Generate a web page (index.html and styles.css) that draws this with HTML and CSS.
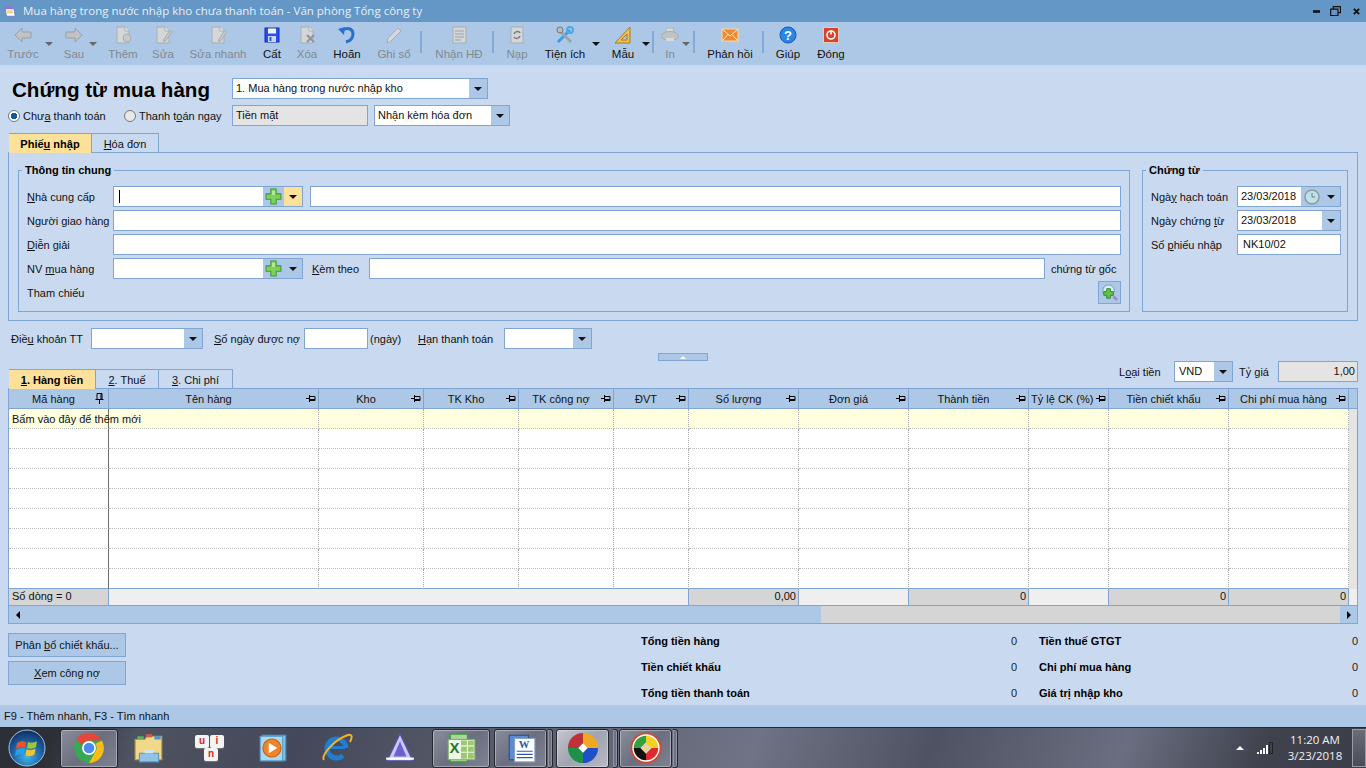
FILE: index.html
```html
<!DOCTYPE html>
<html lang="vi">
<head>
<meta charset="utf-8">
<title>Chứng từ mua hàng</title>
<link rel="stylesheet" href="styles.css">
</head>
<body>
<svg class="sprite" aria-hidden="true">
  <symbol id="pinh" viewBox="0 0 10 9"><path d="M0 4.500h3M3.500 1v7M3.500 2.500h5.500v4h-5.500" stroke="#000" fill="none"/><path d="M4 5.500h5" stroke="#000"/></symbol>
  <symbol id="pinv" viewBox="0 0 9 11"><path d="M2 .5h5v6H2zM.5 6.500h8M4.500 7v4M6 1v5" stroke="#000" fill="none"/></symbol>
  <symbol id="plus" viewBox="0 0 16 16"><path d="M5.500 1h5v4.500H15v5h-4.500V15h-5v-4.500H1v-5h4.500z" fill="#7fd05a" stroke="#3f9a35"/><path d="M6.500 2.500h3v4h-3z" fill="#b4ea90"/></symbol>
  <symbol id="page" viewBox="0 0 20 20"><path d="M4 2h8l4 4v12H4z" fill="#d4d7da" stroke="#a9adb1"/><path d="M12 2v4h4" fill="#eceef0" stroke="#a9adb1"/></symbol>
</svg>

<header class="titlebar">
  <svg class="app-icon" viewBox="0 0 16 16"><path d="M2 3h10l2 11H4z" fill="#fff" stroke="#6a7fc0"/><path d="M2 3h10v3H2z" fill="#8f76d0"/><path d="M4 8h7M4.500 10h7" stroke="#e0b030"/></svg>
  <span class="title-text">Mua hàng trong nước nhập kho chưa thanh toán - Văn phòng Tổng công ty</span>
  <div class="win-controls">
    <svg class="wc-min" viewBox="0 0 8 3"><rect width="8" height="3" fill="#111"/></svg>
    <svg class="wc-max" viewBox="0 0 12 11"><path d="M3.500 3V.7h8v6.600H9M.7 3.500h8v7h-8z" fill="none" stroke="#111" stroke-width="1.300"/></svg>
    <svg class="wc-close" viewBox="0 0 8 8"><path d="M1 1l6 6M7 1L1 7" stroke="#111" stroke-width="2.200"/></svg>
  </div>
</header>

<nav class="toolbar">
  <div class="tool w30 off"><svg viewBox="0 0 20 20"><path d="M2 10l7-7v4h9v6H9v4z" fill="#bfc3c7" stroke="#9b9fa3"/></svg><span>Trước</span></div>
  <div class="slot w22"><i class="caret dim"></i></div>
  <div class="tool w28 off"><svg viewBox="0 0 20 20"><path d="M18 10l-7-7v4H2v6h9v4z" fill="#bfc3c7" stroke="#9b9fa3"/></svg><span>Sau</span></div>
  <div class="slot w10"><i class="caret dim"></i></div>
  <div class="tool w50 off"><svg viewBox="0 0 20 20"><use href="#page"/><circle cx="14" cy="13" r="4" fill="#c6c9cc" stroke="#a9adb1"/></svg><span>Thêm</span></div>
  <div class="tool w30 off"><svg viewBox="0 0 20 20"><use href="#page"/><path d="M11 14l6-9 2 1.500-6 9-2.500 1z" fill="#c6c9cc" stroke="#a9adb1"/></svg><span>Sửa</span></div>
  <div class="tool w80 off"><svg viewBox="0 0 20 20"><use href="#page"/><path d="M11 14l6-9 2 1.500-6 9-2.500 1z" fill="#c6c9cc" stroke="#a9adb1"/></svg><span>Sửa nhanh</span></div>
  <div class="tool w28"><svg viewBox="0 0 20 20"><rect x="3" y="3" width="14" height="14" fill="#2b50e8" stroke="#1128c0"/><rect x="6" y="3.500" width="8" height="5" fill="#f2f6ff"/><rect x="6" y="11" width="8" height="6" fill="#c9d8f8"/><rect x="7.500" y="12" width="2" height="4" fill="#2b50e8"/></svg><span>Cất</span></div>
  <div class="tool w42 off"><svg viewBox="0 0 20 20"><use href="#page"/><path d="M10 10l7 7M17 10l-7 7" stroke="#93979b" stroke-width="2.200"/></svg><span>Xóa</span></div>
  <div class="tool w38"><svg viewBox="0 0 20 20"><path d="M6 5c5-3 10-1 10 4 0 4-3 7-7 8" fill="none" stroke="#2a6fd0" stroke-width="3"/><path d="M1 4l7-2-1 8z" fill="#2a6fd0"/></svg><span>Hoãn</span></div>
  <div class="slot w6"></div>
  <div class="tool w44 off"><svg viewBox="0 0 20 20"><path d="M3 18l1-5L14 3l3 3L7 16z" fill="#d5d7da" stroke="#a9adb1"/></svg><span>Ghi sổ</span></div>
  <div class="slot w10"><i class="sep"></i></div>
  <div class="tool w66 off"><svg viewBox="0 0 20 20"><rect x="4" y="2" width="13" height="16" fill="#d4d7da" stroke="#a9adb1"/><path d="M6 6h9M6 9h9M6 12h9M6 15h6" stroke="#9a9ea2"/></svg><span>Nhận HĐ</span></div>
  <div class="slot w2"><i class="sep"></i></div>
  <div class="tool w46 off"><svg viewBox="0 0 20 20"><rect x="4" y="2" width="12" height="16" fill="#d4d7da" stroke="#a9adb1"/><path d="M7 9c1-3 5-3 6-1M13 11c-1 3-5 3-6 1" fill="none" stroke="#777" stroke-width="1.500"/></svg><span>Nạp</span></div>
  <div class="tool w50"><svg viewBox="0 0 20 20"><path d="M3 17L15 5" stroke="#3d9ee6" stroke-width="3"/><path d="M3 4l13 13" stroke="#9aa4ac" stroke-width="3"/><circle cx="15" cy="5" r="3" fill="none" stroke="#4aa8ec" stroke-width="2"/><circle cx="5" cy="5" r="3" fill="#b8bec4" stroke="#6d7680"/></svg><span>Tiện ích</span></div>
  <div class="slot w12"><i class="caret"></i></div>
  <div class="tool w42"><svg viewBox="0 0 20 20"><path d="M17 2v16H2z" fill="#f0be55" stroke="#a87d22"/><path d="M14 9v6H8z" fill="#adc8e6" stroke="#a87d22"/></svg><span>Mẫu</span></div>
  <div class="slot w4"><i class="caret"></i></div>
  <div class="slot w10"><i class="sep"></i></div>
  <div class="tool w24 off"><svg viewBox="0 0 20 20"><path d="M6 3h7l1 5H6z" fill="#d8dadc" stroke="#b0b3b6"/><ellipse cx="10" cy="11" rx="8.500" ry="4.500" fill="#c0c3c6" stroke="#aaadb0"/><rect x="6" y="13" width="8" height="3" fill="#d8dadc"/></svg><span>In</span></div>
  <div class="slot w8"><i class="caret dim"></i></div>
  <div class="slot w8"><i class="sep"></i></div>
  <div class="tool w64"><svg viewBox="0 0 20 20" class="wide"><rect x="2" y="4" width="16" height="12" fill="#f08a2c" stroke="#fbd7a8"/><path d="M2.500 4.500L10 11l7.500-6.500M2.500 15.500L8 9.500M17.500 15.500L12 9.500" fill="none" stroke="#fff1dd"/></svg><span>Phản hồi</span></div>
  <div class="slot w2"><i class="sep"></i></div>
  <div class="tool w48"><svg viewBox="0 0 20 20"><circle cx="10" cy="10" r="8" fill="#2a86e8" stroke="#1558b0"/><text x="10" y="14.500" class="help-q">?</text></svg><span>Giúp</span></div>
  <div class="tool w38"><svg viewBox="0 0 20 20"><rect x="2.500" y="2.500" width="15" height="15" fill="#d8432a" stroke="#f4c8b8"/><circle cx="10" cy="10" r="4" fill="none" stroke="#fff" stroke-width="1.600"/><path d="M10 5.500v4" stroke="#fff" stroke-width="1.600"/></svg><span>Đóng</span></div>
</nav>

<main class="content">
  <div class="head">
    <h1 class="doc-title">Chứng từ mua hàng</h1>
    <div class="field w256"><span class="val">1. Mua hàng trong nước nhập kho</span><b class="drop"><i class="caret"></i></b></div>
  </div>
  <div class="payrow">
    <div class="radios">
      <label class="radio r1"><i class="dot on"></i><span>Chư<u>a</u> thanh toán</span></label>
      <label class="radio"><i class="dot"></i><span>Thanh t<u>o</u>án ngay</span></label>
    </div>
    <div class="field w136 ro"><span class="val">Tiền mặt</span></div>
    <div class="field w136 ml6"><span class="val">Nhận kèm hóa đơn</span><b class="drop"><i class="caret"></i></b></div>
  </div>

  <div class="tabs top-tabs">
    <div class="tab active w82"><span>Phiế<u>u</u> nhập</span></div>
    <div class="tab w67"><span><u>H</u>óa đơn</span></div>
  </div>
  <section class="panel">
    <div class="group g-main">
      <div class="legend">Thông tin chung</div>
      <div class="frow">
        <span class="lbl"><u>N</u>hà cung cấp</span>
        <div class="field w190"><i class="cursor"></i><span class="val"></span><b class="btn-plus"><svg viewBox="0 0 16 16"><use href="#plus"/></svg></b><b class="drop hot"><i class="caret"></i></b></div>
        <div class="field grow ml7"></div>
      </div>
      <div class="frow"><span class="lbl">N<u>g</u>ười giao hàng</span><div class="field grow"></div></div>
      <div class="frow"><span class="lbl"><u>D</u>iễn giải</span><div class="field grow"></div></div>
      <div class="frow">
        <span class="lbl">NV <u>m</u>ua hàng</span>
        <div class="field w190"><span class="val"></span><b class="btn-plus"><svg viewBox="0 0 16 16"><use href="#plus"/></svg></b><b class="drop"><i class="caret"></i></b></div>
        <span class="lbl-k"><u>K</u>èm theo</span>
        <div class="field grow"></div>
        <span class="lbl-g">chứng từ gốc</span>
      </div>
      <div class="frow last">
        <span class="lbl">Tham chiếu</span>
        <div class="ref-btn"><svg viewBox="0 0 20 20"><circle cx="9" cy="8" r="6" fill="#d8eef4" stroke="#6f9aa8"/><path d="M14 14l4 4" stroke="#9a8cd8" stroke-width="3"/><path d="M7 6h4v3h3v4h-3v3H7v-3H4V9h3z" fill="#62c04a" stroke="#2f8a2f"/></svg></div>
      </div>
    </div>
    <div class="group g-doc">
      <div class="legend">Chứng từ</div>
      <div class="frow"><span class="lbl">Ngà<u>y</u> hạch toán</span><div class="field grow"><span class="val">23/03/2018</span><b class="btn-clock"><svg viewBox="0 0 16 16"><circle cx="8" cy="8" r="7" fill="#bfe0e6" stroke="#8d9aa0" stroke-width="1.500"/><path d="M8 4v4h3" fill="none" stroke="#6a8088"/></svg></b><b class="drop"><i class="caret"></i></b></div></div>
      <div class="frow"><span class="lbl">Ngày chứng <u>t</u>ừ</span><div class="field grow"><span class="val">23/03/2018</span><b class="drop"><i class="caret"></i></b></div></div>
      <div class="frow"><span class="lbl">Số <u>p</u>hiếu nhập</span><div class="field grow"><span class="val nk">NK10/02</span></div></div>
    </div>
  </section>

  <div class="terms">
    <span class="t-l1">Điề<u>u</u> khoản TT</span>
    <div class="field w112"><span class="val"></span><b class="drop"><i class="caret"></i></b></div>
    <span class="t-l2"><u>S</u>ố ngày được nợ</span>
    <div class="field w64"></div>
    <span class="t-l3">(ngày)</span>
    <span class="t-l4"><u>H</u>ạn thanh toán</span>
    <div class="field w88"><span class="val"></span><b class="drop"><i class="caret"></i></b></div>
  </div>
  <div class="handle"><i class="caret up"></i></div>

  <div class="tabrow">
    <div class="tabs">
      <div class="tab active w87"><span><u>1</u>. Hàng tiền</span></div>
      <div class="tab w63"><span><u>2</u>. Thuế</span></div>
      <div class="tab w74"><span><u>3</u>. Chi phí</span></div>
    </div>
    <div class="currency">
      <span class="c-l1">L<u>o</u>ại tiền</span>
      <div class="field w59"><span class="val">VND</span><b class="drop"><i class="caret"></i></b></div>
      <span class="c-l2">Tỷ <u>g</u>iá</span>
      <div class="field w80 ro"><span class="val num">1,00</span></div>
    </div>
  </div>

  <section class="grid">
    <div class="g-row g-head">
      <div class="hc">Mã hàng<svg class="pin-v"><use href="#pinv"/></svg></div>
      <div class="hc">Tên hàng<svg class="pin"><use href="#pinh"/></svg></div>
      <div class="hc">Kho<svg class="pin"><use href="#pinh"/></svg></div>
      <div class="hc">TK Kho<svg class="pin"><use href="#pinh"/></svg></div>
      <div class="hc">TK công nợ<svg class="pin"><use href="#pinh"/></svg></div>
      <div class="hc">ĐVT<svg class="pin"><use href="#pinh"/></svg></div>
      <div class="hc">Số lượng<svg class="pin"><use href="#pinh"/></svg></div>
      <div class="hc">Đơn giá<svg class="pin"><use href="#pinh"/></svg></div>
      <div class="hc">Thành tiền<svg class="pin"><use href="#pinh"/></svg></div>
      <div class="hc hc-left">Tỷ lệ CK (%)<svg class="pin"><use href="#pinh"/></svg></div>
      <div class="hc">Tiền chiết khấu<svg class="pin"><use href="#pinh"/></svg></div>
      <div class="hc">Chi phí mua hàng<svg class="pin"><use href="#pinh"/></svg></div>
      <div class="hc end"></div>
    </div>
    <div class="g-row g-new">
      <div class="c first new-text">Bấm vào đây để thêm mới</div><div class="c"></div><div class="c"></div><div class="c"></div><div class="c"></div><div class="c"></div><div class="c"></div><div class="c"></div><div class="c"></div><div class="c"></div><div class="c"></div><div class="c"></div><div class="strip"></div>
    </div>
    <div class="g-row"><div class="c first"></div><div class="c"></div><div class="c"></div><div class="c"></div><div class="c"></div><div class="c"></div><div class="c"></div><div class="c"></div><div class="c"></div><div class="c"></div><div class="c"></div><div class="c"></div><div class="strip"></div></div>
    <div class="g-row"><div class="c first"></div><div class="c"></div><div class="c"></div><div class="c"></div><div class="c"></div><div class="c"></div><div class="c"></div><div class="c"></div><div class="c"></div><div class="c"></div><div class="c"></div><div class="c"></div><div class="strip"></div></div>
    <div class="g-row"><div class="c first"></div><div class="c"></div><div class="c"></div><div class="c"></div><div class="c"></div><div class="c"></div><div class="c"></div><div class="c"></div><div class="c"></div><div class="c"></div><div class="c"></div><div class="c"></div><div class="strip"></div></div>
    <div class="g-row"><div class="c first"></div><div class="c"></div><div class="c"></div><div class="c"></div><div class="c"></div><div class="c"></div><div class="c"></div><div class="c"></div><div class="c"></div><div class="c"></div><div class="c"></div><div class="c"></div><div class="strip"></div></div>
    <div class="g-row"><div class="c first"></div><div class="c"></div><div class="c"></div><div class="c"></div><div class="c"></div><div class="c"></div><div class="c"></div><div class="c"></div><div class="c"></div><div class="c"></div><div class="c"></div><div class="c"></div><div class="strip"></div></div>
    <div class="g-row"><div class="c first"></div><div class="c"></div><div class="c"></div><div class="c"></div><div class="c"></div><div class="c"></div><div class="c"></div><div class="c"></div><div class="c"></div><div class="c"></div><div class="c"></div><div class="c"></div><div class="strip"></div></div>
    <div class="g-row"><div class="c first"></div><div class="c"></div><div class="c"></div><div class="c"></div><div class="c"></div><div class="c"></div><div class="c"></div><div class="c"></div><div class="c"></div><div class="c"></div><div class="c"></div><div class="c"></div><div class="strip"></div></div>
    <div class="g-row g-last"><div class="c first"></div><div class="c"></div><div class="c"></div><div class="c"></div><div class="c"></div><div class="c"></div><div class="c"></div><div class="c"></div><div class="c"></div><div class="c"></div><div class="c"></div><div class="c"></div><div class="strip"></div></div>
    <div class="g-foot">
      <div class="fc gray left">Số dòng = 0</div>
      <div class="fc span5"></div>
      <div class="fc gray">0,00</div>
      <div class="fc"></div>
      <div class="fc gray">0</div>
      <div class="fc"></div>
      <div class="fc gray">0</div>
      <div class="fc gray">0</div>
      <div class="fc end"></div>
    </div>
    <div class="g-scroll">
      <div class="sb-btn"><i class="tri-l"></i></div>
      <div class="sb-thumb"></div>
      <div class="sb-track"></div>
      <div class="sb-btn"><i class="tri-r"></i></div>
    </div>
  </section>

  <div class="bottom">
    <div class="actions">
      <div class="action"><span>Phân <u>b</u>ổ chiết khấu...</span></div>
      <div class="action"><span><u>X</u>em công nợ</span></div>
    </div>
    <div class="totals">
      <b>Tổng tiền hàng</b><span>0</span><i></i><b>Tiền thuế GTGT</b><span>0</span>
      <b>Tiền chiết khấu</b><span>0</span><i></i><b>Chi phí mua hàng</b><span>0</span>
      <b>Tổng tiền thanh toán</b><span>0</span><i></i><b>Giá trị nhập kho</b><span>0</span>
    </div>
  </div>
</main>

<div class="status">F9 - Thêm nhanh, F3 - Tìm nhanh</div>

<footer class="taskbar">
  <div class="start"><svg viewBox="0 0 38 38"><defs><radialGradient id="orb" cx=".5" cy=".75" r=".75"><stop offset="0" stop-color="#3fb4e8"/><stop offset=".6" stop-color="#1d5a9c"/><stop offset="1" stop-color="#0f2f5c"/></radialGradient></defs><circle cx="19" cy="19" r="18" fill="url(#orb)" stroke="#9cc4e8"/><path d="M9 14c3-2 6-2 9-1l-1 6c-3-1-6-1-9 1z" fill="#e8552a"/><path d="M20 13c3 1 6 1 9-1l-1 6c-3 2-6 2-9 1z" fill="#9cc830"/><path d="M8 21c3-2 6-2 9-1l-1 6c-3-1-6-1-9 1z" fill="#2a9ee8"/><path d="M18.500 20.500c3 1 6 1 9-1l-1 6c-3 2-6 2-9 1z" fill="#f4c430"/></svg></div>
  <div class="tb framed w58"><svg viewBox="0 0 30 30"><circle cx="15" cy="15" r="14" fill="#3aa757"/><path d="M15 1a14 14 0 0 1 12.100 7H15a7 7 0 0 0-6.500 4.500L3 7A14 14 0 0 1 15 1z" fill="#e8453c"/><path d="M27.100 8A14 14 0 0 1 15 29l6-10.500A7 7 0 0 0 21 11z" fill="#f9bc15"/><circle cx="15" cy="15" r="6.500" fill="#fff"/><circle cx="15" cy="15" r="5" fill="#4a8af4"/></svg></div>
  <div class="tb w62"><svg viewBox="0 0 30 30"><path d="M2 7h9l2-3h14v22H2z" fill="#f2d98a" stroke="#b89a50"/><path d="M4 4h6v3H4z" fill="#5ab55a"/><path d="M12 2h6v3h-6z" fill="#d05a4a"/><path d="M20 4h6v3h-6z" fill="#4a90d8"/><path d="M6 20h18v8H6z" fill="#8fc4e8" stroke="#5a94c0"/><path d="M11 20h8v-3h-8z" fill="#cfe6f4"/></svg></div>
  <div class="tb w62"><div class="uni"><span class="key k1">u</span><span class="key k2">i</span><span class="key k3">n</span></div></div>
  <div class="tb w62"><svg viewBox="0 0 30 30"><rect x="5" y="3" width="22" height="24" fill="#7cc0e4" stroke="#4a8cb8"/><rect x="3" y="4" width="21" height="23" fill="#a8d8f0" stroke="#5a9cc8"/><circle cx="14" cy="15" r="8.500" fill="#f0842a" stroke="#c85f10"/><path d="M11 10l8 5-8 5z" fill="#fff"/></svg></div>
  <div class="tb w66"><svg viewBox="0 0 32 32"><path d="M25 16a9.500 9.500 0 1 0-3 7.500" fill="none" stroke="#1f7ed0" stroke-width="5"/><path d="M9 15.500h15" stroke="#1f7ed0" stroke-width="3"/><path d="M3 28C0 24 12 8 27 3c5-1 4 3 2 7" fill="none" stroke="#f0b428" stroke-width="2"/></svg></div>
  <div class="tb w60"><svg viewBox="0 0 30 30"><path d="M15 2L27 27H3z" fill="#c8c8f0" stroke="#5a50c0"/><path d="M15 9l6 14H9z" fill="#6a60d0"/><path d="M2 25h26" stroke="#fff" stroke-width="2"/></svg></div>
  <div class="tb framed w58 ml2"><svg viewBox="0 0 30 30"><path d="M5 2h16v26H5z" fill="#a8d898" stroke="#3a9a3a"/><rect x="3" y="7" width="25" height="19" fill="#f0f6e8" stroke="#7ab06a"/><path d="M15 8h12v17H15z" fill="#9cc870"/><path d="M15 13h12M15 19h12M21 8v17" stroke="#f0f6e8"/><text x="9" y="20" class="xl">X</text></svg></div>
  <div class="tb framed w53 ml4"><svg viewBox="0 0 30 30"><path d="M4 3h18v23H4z" fill="#5a8ad8" stroke="#1f4ea0"/><rect x="9" y="6" width="19" height="22" fill="#fff" stroke="#8aa0c0"/><text x="13" y="15" class="wd">W</text><path d="M11 18h15M11 21h15M11 24h15" stroke="#2a5ab0"/></svg></div>
  <i class="sliver ml1"></i>
  <div class="tb framed lit w53 ml3"><svg viewBox="0 0 34 34"><path d="M17 17V1A16 16 0 0 0 1 17z" fill="#c03038"/><path d="M17 17V1a16 16 0 0 1 16 16z" fill="#f0a820"/><path d="M17 17h16a16 16 0 0 1-16 16z" fill="#2050c8"/><path d="M17 17v16A16 16 0 0 1 1 17z" fill="#209048"/><path d="M17 12l5 5-5 5-5-5z" fill="#fff"/></svg></div>
  <i class="sliver ml4"></i>
  <div class="tb framed w53 ml1"><svg viewBox="0 0 34 34"><circle cx="17" cy="17" r="15.500" fill="#fff" stroke="#d04a30" stroke-width="2"/><path d="M17 4a13 13 0 0 1 13 13h-8l-5-5z" fill="#f4d020"/><path d="M4 17A13 13 0 0 1 17 4v8l-5 5z" fill="#30a040"/><path d="M30 17a13 13 0 0 1-13 13v-8l5-5z" fill="#e02830"/><path d="M17 30A13 13 0 0 1 4 17h8l5 5z" fill="#111"/><path d="M17 11l6 6-6 6-6-6z" fill="#e8d0a0"/></svg></div>
  <i class="sliver ml1"></i>
  <div class="tray">
    <i class="tray-up"></i>
    <svg class="signal" viewBox="0 0 16 12"><path d="M0 10h2v2H0zM3 8h2v4H3zM6 6h2v6H6zM9 3h2v9H9z" fill="#fff"/><rect x="12.500" y=".5" width="3" height="11" fill="none" stroke="#222"/></svg>
    <div class="clock"><span>11:20 AM</span><span>3/23/2018</span></div>
    <div class="show-desktop"></div>
  </div>
</footer>
</body>
</html>
```

FILE: styles.css
```css
* { box-sizing: border-box; }
html, body { margin: 0; padding: 0; }
body {
  width: 1366px; height: 768px; overflow: hidden;
  display: flex; flex-direction: column;
  background: #c9daf0; color: #111;
  font: 11px/16px "Liberation Sans", Arial, sans-serif;
}
u { text-decoration: underline; }
.sprite { position: absolute; width: 0; height: 0; }

/* title bar */
.titlebar { height: 22px; background: #6496c6; display: flex; align-items: center; padding-left: 3px; color: #e8f0f8; }
.app-icon { width: 14px; height: 14px; }
.title-text { margin-left: 6px; font-family: "Open Sans", sans-serif; font-size: 11.500px; }
.win-controls { margin-left: auto; display: flex; align-items: center; width: 53px; height: 22px; }
.wc-min { width: 7px; height: 3px; }
.wc-max { width: 11px; height: 10px; margin-left: 10px; }
.wc-close { width: 7px; height: 7px; margin-left: 12px; }

/* toolbar */
.toolbar { height: 43px; background: #adc8e6; display: flex; padding-left: 8px; }
.tool { display: flex; flex-direction: column; align-items: center; flex: none; color: #111; white-space: nowrap; justify-content: flex-start; padding-top: 3px; }
.tool svg { width: 20px; height: 20px; flex: none; }
.tool span { line-height: 16px; margin-top: 1px; font-size: 11.500px; }
.tool.off span { color: #82898f; }
.help-q { font: bold 13px "Liberation Sans", sans-serif; fill: #fff; text-anchor: middle; }
.slot { flex: none; display: flex; justify-content: center; position: relative; }
.w2 { width: 2px; } .w4 { width: 4px; } .w6 { width: 6px; } .w8 { width: 8px; } .w10 { width: 10px; } .w12 { width: 12px; }
.w22 { width: 22px; } .w24 { width: 24px; } .w28 { width: 28px; } .w30 { width: 30px; } .w38 { width: 38px; }
.w42 { width: 42px; } .w44 { width: 44px; } .w46 { width: 46px; } .w48 { width: 48px; } .w50 { width: 50px; }
.w53 { width: 53px; } .w58 { width: 58px; } .w60 { width: 60px; } .w62 { width: 62px; } .w64 { width: 64px; }
.w66 { width: 66px; } .w80 { width: 80px; }
.caret { display: block; width: 0; height: 0; border: 4px solid transparent; border-top-color: #111; border-bottom-width: 0; flex: none; }
.caret.dim { border-top-color: #666; }
.slot .caret { margin-top: 20px; }
.sep { display: block; width: 2px; height: 22px; margin-top: 9px; background: #84a9d6; flex: none; }

/* content */
.content { flex: 1; min-height: 0; padding: 0 8px; display: flex; flex-direction: column; }
.head { display: flex; padding: 13px 0 0 4px; }
.doc-title { margin: 0; width: 220px; height: 21px; font: bold 20.600px/23px "Liberation Sans", sans-serif; color: #000; white-space: nowrap; }
.payrow { display: flex; margin-top: 6px; height: 21px; }
.radios { width: 224px; display: flex; align-items: center; flex: none; }
.radio { display: flex; align-items: center; white-space: nowrap; }
.r1 { width: 116px; }
.dot { width: 12px; height: 12px; border-radius: 50%; border: 1px solid #777; background: #e8e8e8; margin-right: 3px; flex: none; }
.dot.on { background: radial-gradient(circle, #0d5a9c 0 3px, #fff 3.500px); }

.field { height: 21px; border: 1px solid #80a5d2; background: #fff; display: flex; align-items: stretch; flex: none; position: relative; }
.field.grow { flex: 1 1 0; min-width: 0; }
.field.ro { background: #e4e4e4; }
.val { flex: 1; padding-left: 3px; line-height: 19px; white-space: nowrap; overflow: hidden; }
.val.num { text-align: right; padding-right: 2px; }
.val.nk { padding-left: 5px; }
.drop { width: 18px; background: #adc8e6; display: flex; align-items: center; justify-content: center; flex: none; }
.drop.hot { background: #fde19a; }
.btn-plus { width: 21px; background: #adc8e6; display: flex; align-items: center; justify-content: center; flex: none; }
.btn-plus svg { width: 17px; height: 17px; }
.btn-clock { width: 21px; background: #adc8e6; display: flex; align-items: center; justify-content: center; flex: none; }
.btn-clock svg { width: 16px; height: 16px; }
.cursor { position: absolute; left: 5px; top: 3px; width: 1px; height: 13px; background: #000; }
.w256 { width: 256px; } .w136 { width: 136px; } .w190 { width: 190px; } .w112 { width: 112px; } .w88 { width: 88px; }
.ml6 { margin-left: 6px; } .ml7 { margin-left: 7px; }

/* tabs */
.tabs { display: flex; padding-left: 1px; }
.top-tabs { margin-top: 7px; position: relative; z-index: 1; }
.tab { height: 20px; border: 1px solid #80a5d2; border-left: 0; border-bottom: 0; display: flex; align-items: center; justify-content: center; flex: none; white-space: nowrap; }
.tab.active { background: #fde19a; font-weight: bold; color: #000; }
.w82 { width: 83px; } .w67 { width: 67px; } .w87 { width: 87px; } .w63 { width: 63px; } .w74 { width: 74px; }

/* panel & groups */
.panel { margin-top: -1px; height: 169px; border: 1px solid #80a5d2; padding: 17px 9px 0 9px; display: flex; gap: 12px; flex: none; }
.group { position: relative; height: 142px; border: 1px solid #80a5d2; padding: 15px 8px 0 8px; flex: none; }
.g-main { width: 1112px; }
.g-doc { width: 206px; padding-right: 6px; }
.legend { position: absolute; left: 3px; top: -9px; padding: 0 3px; background: #c9daf0; font-weight: bold; line-height: 16px; color: #000; white-space: nowrap; }
.frow { display: flex; align-items: center; height: 21px; margin-bottom: 3px; white-space: nowrap; }
.frow.last { height: 23px; margin-top: -1px; justify-content: space-between; }
.lbl { width: 86px; flex: none; }
.lbl-k { width: 57px; margin-left: 9px; flex: none; }
.lbl-g { width: 70px; margin-left: 6px; flex: none; }
.ref-btn { width: 23px; height: 23px; background: #adc8e6; border: 1px solid #80a5d2; display: flex; align-items: center; justify-content: center; }
.ref-btn svg { width: 19px; height: 19px; }

/* terms */
.terms { display: flex; align-items: center; height: 21px; margin-top: 7px; flex: none; white-space: nowrap; }
.t-l1 { width: 83px; padding-left: 3px; flex: none; }
.t-l2 { width: 90px; margin-left: 11px; flex: none; }
.t-l3 { width: 48px; margin-left: 2px; flex: none; }
.t-l4 { width: 86px; flex: none; }
.handle { width: 50px; height: 8px; margin: 4px 0 0 650px; background: #adc8e6; border: 1px solid #80a5d2; display: flex; align-items: center; justify-content: center; flex: none; }
.caret.up { border: 3px solid transparent; border-bottom-color: #fff; border-top-width: 0; }

.tabrow { display: flex; justify-content: space-between; height: 28px; align-items: flex-end; flex: none; position: relative; z-index: 1; }
.currency { display: flex; align-items: center; align-self: flex-start; height: 21px; white-space: nowrap; }
.c-l1 { width: 55px; } .c-l2 { width: 39px; margin-left: 6px; }
.w59 { width: 59px; } .w80 { width: 80px; }
.currency .w59 .val { padding-left: 4px; }

/* grid */
.grid { margin-top: -1px; height: 236px; border: 1px solid #80a5d2; flex: none; background: #fff; }
.g-row, .g-foot { display: grid; grid-template-columns: 100px 210px 105px 95px 95px 75px 110px 110px 120px 80px 120px 120px 8px; }
.g-row { height: 20px; }
.hc { background: #adc8e6; border-right: 1px solid #80a5d2; border-bottom: 1px solid #80a5d2; position: relative; display: flex; align-items: center; justify-content: center; padding-right: 10px; white-space: nowrap; }
.hc-left { justify-content: flex-start; padding-left: 2px; }
.hc.end { border-right: 0; padding: 0; }
.pin { position: absolute; right: 2px; top: 5px; width: 10px; height: 9px; }
.pin-v { position: absolute; right: 4px; top: 4px; width: 9px; height: 11px; }
.c { border-right: 1px dotted #aaa; border-bottom: 1px dotted #bbb; min-width: 0; }
.c.first { border-right: 1px solid #6d6d6d; position: relative; }
.strip { background: #e4e4e4; }
.g-new .c { background: #ffffdf; }
.new-text { padding: 1px 0 0 3px; line-height: 18px; white-space: nowrap; overflow: visible; z-index: 1; }
.g-last .c { border-bottom: 1px solid #80a5d2; }
.g-foot { height: 17px; border-bottom: 1px solid #80a5d2; }
.fc { background: #efefef; border-right: 1px solid #80a5d2; text-align: right; padding-right: 2px; line-height: 15px; white-space: nowrap; }
.fc.gray { background: #d5d5d5; }
.fc.left { text-align: left; padding-left: 3px; }
.fc.end { border-right: 0; padding: 0; }
.span5 { grid-column: span 5; }
.g-scroll { height: 17px; display: flex; background: #adc8e6; }
.sb-btn { width: 17px; display: flex; align-items: center; justify-content: center; background: #adc8e6; flex: none; }
.sb-thumb { width: 795px; flex: none; }
.sb-track { flex: 1; background: #d5d5d5; }
.tri-l { border: 4px solid transparent; border-right-color: #000; border-left-width: 0; }
.tri-r { border: 4px solid transparent; border-left-color: #000; border-right-width: 0; }

/* bottom */
.bottom { display: flex; justify-content: space-between; flex: 1; min-height: 0; }
.actions { display: flex; flex-direction: column; gap: 4px; padding-top: 9px; }
.action { width: 118px; height: 24px; background: #adc8e6; border: 1px solid #80a5d2; display: flex; align-items: center; justify-content: center; white-space: nowrap; }
.totals { width: 717px; padding-top: 4px; display: grid; grid-template-columns: 356px 20px 22px 299px 20px; grid-auto-rows: 26px; align-items: center; }
.totals b { color: #000; white-space: nowrap; }
.totals span { text-align: right; color: #222; }

/* status */
.status { height: 22px; background: #adc8e6; padding-left: 4px; line-height: 23px; flex: none; }

/* taskbar */
.taskbar { height: 41px; flex: none; display: flex; align-items: center; border-top: 1px solid #23262c; color: #fff;
  background: linear-gradient(110deg, #2d2f36 0 4%, #4f5260 10%, #45485a 22%, #555866 34%, #6f7385 55%, #4f5262 68%, #6a6e80 82%, #40434e 92%, #3b3e48 100%); }
.start { width: 60px; height: 40px; padding-left: 8px; display: flex; align-items: center; flex: none; }
.start svg { width: 38px; height: 38px; }
.tb { height: 39px; display: flex; align-items: center; justify-content: center; flex: none; }
.tb svg { width: 32px; height: 32px; }
.framed { border: 1px solid #23262c; border-radius: 3px; box-shadow: inset 0 0 0 1px rgba(255,255,255,.35); background: linear-gradient(135deg, #8a8e9c, #6a6e7e 50%, #7e8292); }
.framed.lit { background: linear-gradient(135deg, #c4c6d0, #a0a3b0 50%, #b8bac6); }
.ml1 { margin-left: 1px; } .ml2 { margin-left: 2px; } .ml3 { margin-left: 3px; } .ml4 { margin-left: 4px; }
.sliver { width: 5px; height: 39px; border: 1px solid #23262c; border-left: 0; border-radius: 0 3px 3px 0; background: #6d7080; box-shadow: inset 0 0 0 1px rgba(255,255,255,.25); flex: none; }
.uni { display: grid; grid-template-columns: 15px 15px; width: 32px; height: 26px; position: relative; }
.key { background: #f4f4f4; border-radius: 2px; width: 14px; height: 13px; color: #d02828; font: bold 10px/12px "Liberation Sans", sans-serif; text-align: center; box-shadow: 0 1px 1px #777; }
.k3 { grid-column: 1 / span 2; margin-left: 9px; }
.xl { font: bold 14px "Liberation Sans", sans-serif; fill: #1f7a2a; text-anchor: middle; }
.wd { font: bold 10px "Liberation Serif", serif; fill: #2a5ab0; }
.tray { margin-left: auto; display: flex; align-items: center; height: 40px; }
.tray-up { width: 0; height: 0; border: 4px solid transparent; border-bottom: 4px solid #fff; border-top-width: 0; margin-right: 13px; }
.signal { width: 16px; height: 12px; margin-right: 12px; }
.clock { display: flex; flex-direction: column; align-items: center; width: 60px; font: 11.500px/16px "Open Sans", sans-serif; color: #f2f2f2; margin-right: 7px; white-space: nowrap; }
.show-desktop { width: 14px; height: 38px; border: 1px solid #9a9da8; background: linear-gradient(#6a6d78, #4a4d58); }
```
